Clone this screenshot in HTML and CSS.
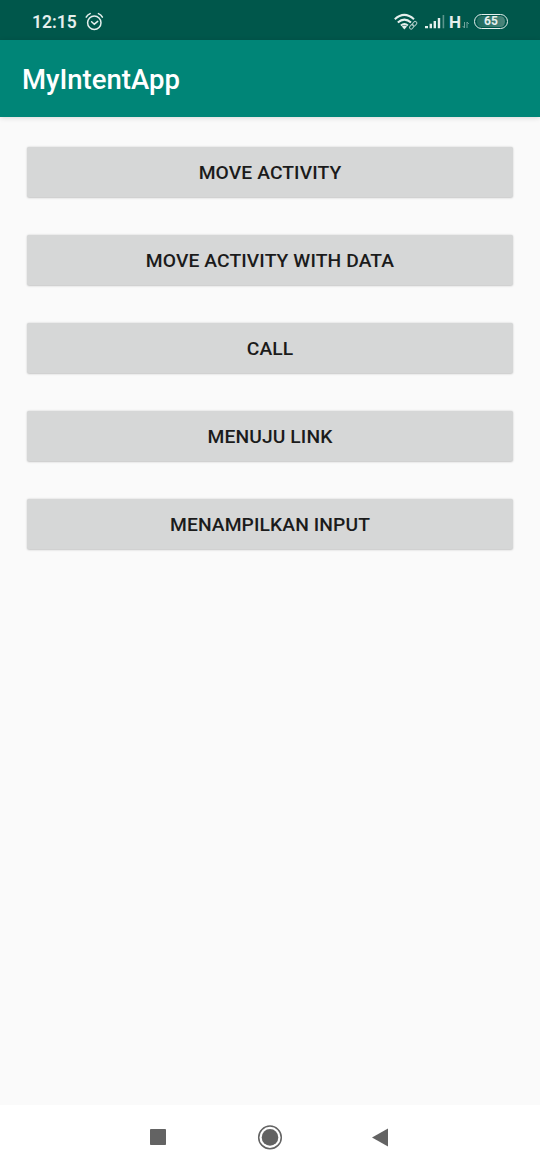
FILE: index.html
```html
<!DOCTYPE html>
<html lang="id">
<head>
<meta charset="utf-8">
<title>MyIntentApp</title>
<link rel="stylesheet" href="styles.css">
</head>
<body>
<header class="status-bar">
  <span class="clock">12:15</span>
  <svg class="alarm" width="20" height="20" viewBox="0 0 20 20" fill="none" stroke="currentColor" stroke-width="1.5" stroke-linecap="round">
    <circle cx="9.3" cy="10.8" r="6.7"/>
    <path d="M6.6 9.8l2.7 2.4 3.4-2.8M1.2 5.2q1.4-2.5 4-3.6M17.4 5.2q-1.4-2.5-4-3.6"/>
  </svg>
  <div class="indicators">
    <svg class="wifi" width="24" height="18" viewBox="0 0 24 18" fill="none" stroke="currentColor" stroke-width="2">
      <path d="M.8 6.2q9.5-8.6 19.2 0M3.8 9.6q6.6-6 13.2 0M6.9 12.6q3.5-3.1 7 0"/>
      <path d="M7.8 13.4q2.6-1.6 5.2 0l-2.6 3z" fill="currentColor" stroke="none"/>
      <g class="link" stroke-width="1">
        <rect x="-1.6" y="-3.1" width="3.2" height="5" rx="1.6" transform="translate(20.2 11.2) rotate(40)"/>
        <rect x="-1.6" y="-2" width="3.2" height="5" rx="1.6" transform="translate(18 13.4) rotate(40)"/>
      </g>
    </svg>
    <svg class="signal" width="20" height="14" viewBox="0 0 20 14" fill="currentColor">
      <path d="M0 11h3v2.3H0zM4.6 8.8H7v4.5H4.6zM8.6 6H11v7.3H8.6zM12.8 3h2.4v10.3h-2.4z"/>
      <path class="dim" d="M17.6 0h1.6v13.3h-1.6z"/>
    </svg>
    <span class="network">H</span>
    <svg class="traffic" width="8" height="8" viewBox="0 0 8 8" fill="none" stroke="currentColor" stroke-width="1">
      <path d="M2.5 1v6L.7 5M5 7V1l1.8 2"/>
    </svg>
    <span class="battery">65</span>
  </div>
</header>
<div class="app-bar"><h1>MyIntentApp</h1></div>
<main class="content">
  <button class="btn">MOVE ACTIVITY</button>
  <button class="btn">MOVE ACTIVITY WITH DATA</button>
  <button class="btn">CALL</button>
  <button class="btn">MENUJU LINK</button>
  <button class="btn">MENAMPILKAN INPUT</button>
</main>
<nav class="nav-bar">
  <svg width="26" height="26" viewBox="0 0 26 26"><rect x="4" y="5" width="16" height="16" rx=".8" fill="#636363"/></svg>
  <svg width="26" height="26" viewBox="0 0 26 26"><circle cx="13" cy="13.4" r="11.3" fill="none" stroke="#636363" stroke-width="1.5"/><circle cx="13" cy="13.4" r="8.3" fill="#636363"/></svg>
  <svg width="26" height="26" viewBox="0 0 26 26"><path d="M4 13.4L20 4.4v18z" fill="#636363"/></svg>
</nav>
</body>
</html>
```

FILE: styles.css
```css
* {
  box-sizing: border-box;
}

body {
  margin: 0;
  height: 1170px;
  display: flex;
  flex-direction: column;
  overflow: hidden;
  background: #fafafa;
  font-family: Roboto, sans-serif;
}

.status-bar {
  height: 40px;
  flex: none;
  display: flex;
  align-items: center;
  padding: 3px 32px 0;
  background: #00574b;
  color: #e5efed;
}

.clock {
  width: 45px;
  font-size: 17.5px;
  font-weight: 600;
  line-height: 20px;
}

.alarm {
  margin-left: 8px;
}

.indicators {
  margin-left: auto;
  display: flex;
  align-items: center;
}

.wifi {
  margin-right: 7px;
}

.link {
  opacity: 0.75;
}

.dim {
  opacity: 0.4;
}

.network {
  width: 12px;
  margin-left: 4px;
  font-size: 17px;
  font-weight: 700;
  line-height: 20px;
}

.traffic {
  margin: 6px 4px 0 1px;
  opacity: 0.5;
}

.battery {
  width: 34px;
  height: 15px;
  padding: 1px 2px;
  border: 1.5px solid #e5efed;
  border-radius: 8px;
  background: linear-gradient(90deg, #1c6a5d, #4c857b) content-box;
  font-size: 12px;
  font-weight: 700;
  line-height: 11.5px;
  text-align: center;
}

.app-bar {
  height: 77px;
  flex: none;
  display: flex;
  align-items: center;
  padding: 3px 22px 0;
  background: #008577;
  box-shadow: 0 1px 5px rgba(0, 0, 0, 0.14);
}

.app-bar h1 {
  margin: 0;
  color: #fff;
  font-size: 27.5px;
  font-weight: 500;
  line-height: 32px;
}

.content {
  flex: 1;
  display: flex;
  flex-direction: column;
  gap: 38px;
  padding: 30px 27px;
}

.btn {
  height: 50px;
  flex: none;
  padding: 1px 0 0;
  border: 0;
  border-radius: 2px;
  background: #d6d7d7;
  box-shadow: 0 0.5px 2px rgba(0, 0, 0, 0.22);
  color: #1b1b1b;
  font: 500 19.25px/24px Roboto, sans-serif;
  letter-spacing: 0.1px;
}

.nav-bar {
  height: 65px;
  flex: none;
  display: flex;
  justify-content: center;
  gap: 85px;
  padding-top: 19px;
  background: #fff;
}
```
